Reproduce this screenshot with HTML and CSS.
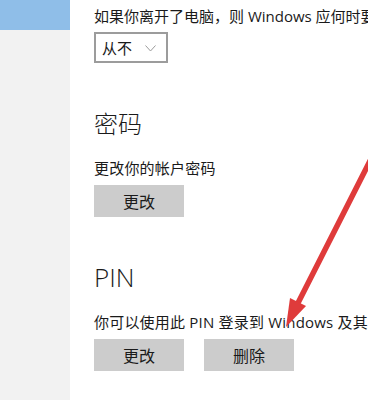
FILE: index.html
```html
<!DOCTYPE html>
<html lang="zh-CN">
<head>
  <meta charset="UTF-8" />
  <title>登录选项</title>
  <link rel="stylesheet" href="styles.css">
</head>
<body>

  <div class="page">
    <div class="sidebar">
      <div class="active"></div>
    </div>

    <div class="main">
      <p class="desc first">如果你离开了电脑，则 Windows 应何时要求你重新登录?</p>
      <div class="select">
        <span>从不</span>
        <svg width="11" height="7" viewBox="0 0 11 7"><polyline points="0.5,0.5 5.5,6 10.5,0.5" fill="none" stroke="#9a9a9a" stroke-width="1"/></svg>
      </div>

      <h2 class="title">密码</h2>
      <p class="desc">更改你的帐户密码</p>
      <div class="buttons">
        <button>更改</button>
      </div>

      <h2 class="title pin">PIN</h2>
      <p class="desc">你可以使用此 PIN 登录到 Windows 及其应用和服务。</p>
      <div class="buttons">
        <button>更改</button>
        <button>删除</button>
      </div>
    </div>
  </div>

  <svg class="arrow" width="368" height="400" viewBox="0 0 368 400">
    <line x1="374" y1="153" x2="298" y2="303" stroke="#df3b3b" stroke-width="5.5" stroke-linecap="round"/>
    <polygon points="286,327 306,306 290,298" fill="#df3b3b"/>
  </svg>

</body>
</html>
```

FILE: styles.css
```css
body {
  margin: 0;
  padding: 0;
  background-color: #fff;
  font-family: "Open Sans", "Noto Sans CJK SC", sans-serif;
  color: #1a1a1a;
  overflow: hidden;
  width: 368px;
  height: 400px;
  position: relative;
}

.page {
  display: flex;
  height: 400px;
}

.sidebar {
  width: 70px;
  flex-shrink: 0;
  background-color: #f2f2f2;
}

.sidebar .active {
  height: 30px;
  background-color: #8fbee8;
}

.main {
  padding-left: 24px;
  flex: 1;
  min-width: 0;
  overflow: hidden;
}

.desc {
  margin: 0;
  font-size: 15px;
  line-height: 20px;
  white-space: nowrap;
  letter-spacing: 0.2px;
}

.desc.first {
  margin-top: 6px;
  letter-spacing: 0;
}

.select {
  margin-top: 6px;
  width: 64px;
  height: 27px;
  border: 2px solid #9c9c9c;
  display: flex;
  align-items: center;
  gap: 13px;
  padding-left: 6px;
  box-sizing: content-box;
  font-size: 15px;
}

.select svg {
  margin-top: 1px;
}

.title {
  margin: 45px 0 18px;
  font-size: 24px;
  font-weight: 300;
  line-height: 32px;
}

.title.pin {
  margin: 44px 0 19px;
  font-size: 26px;
}

.buttons {
  display: flex;
  gap: 20px;
  margin-top: 7px;
}

.buttons button {
  width: 90px;
  height: 32px;
  border: none;
  background-color: #cccccc;
  font-family: "Noto Sans CJK SC", sans-serif;
  font-size: 16px;
  color: #1a1a1a;
  padding: 0;
}

.arrow {
  position: absolute;
  top: 0;
  left: 0;
  pointer-events: none;
}
```
